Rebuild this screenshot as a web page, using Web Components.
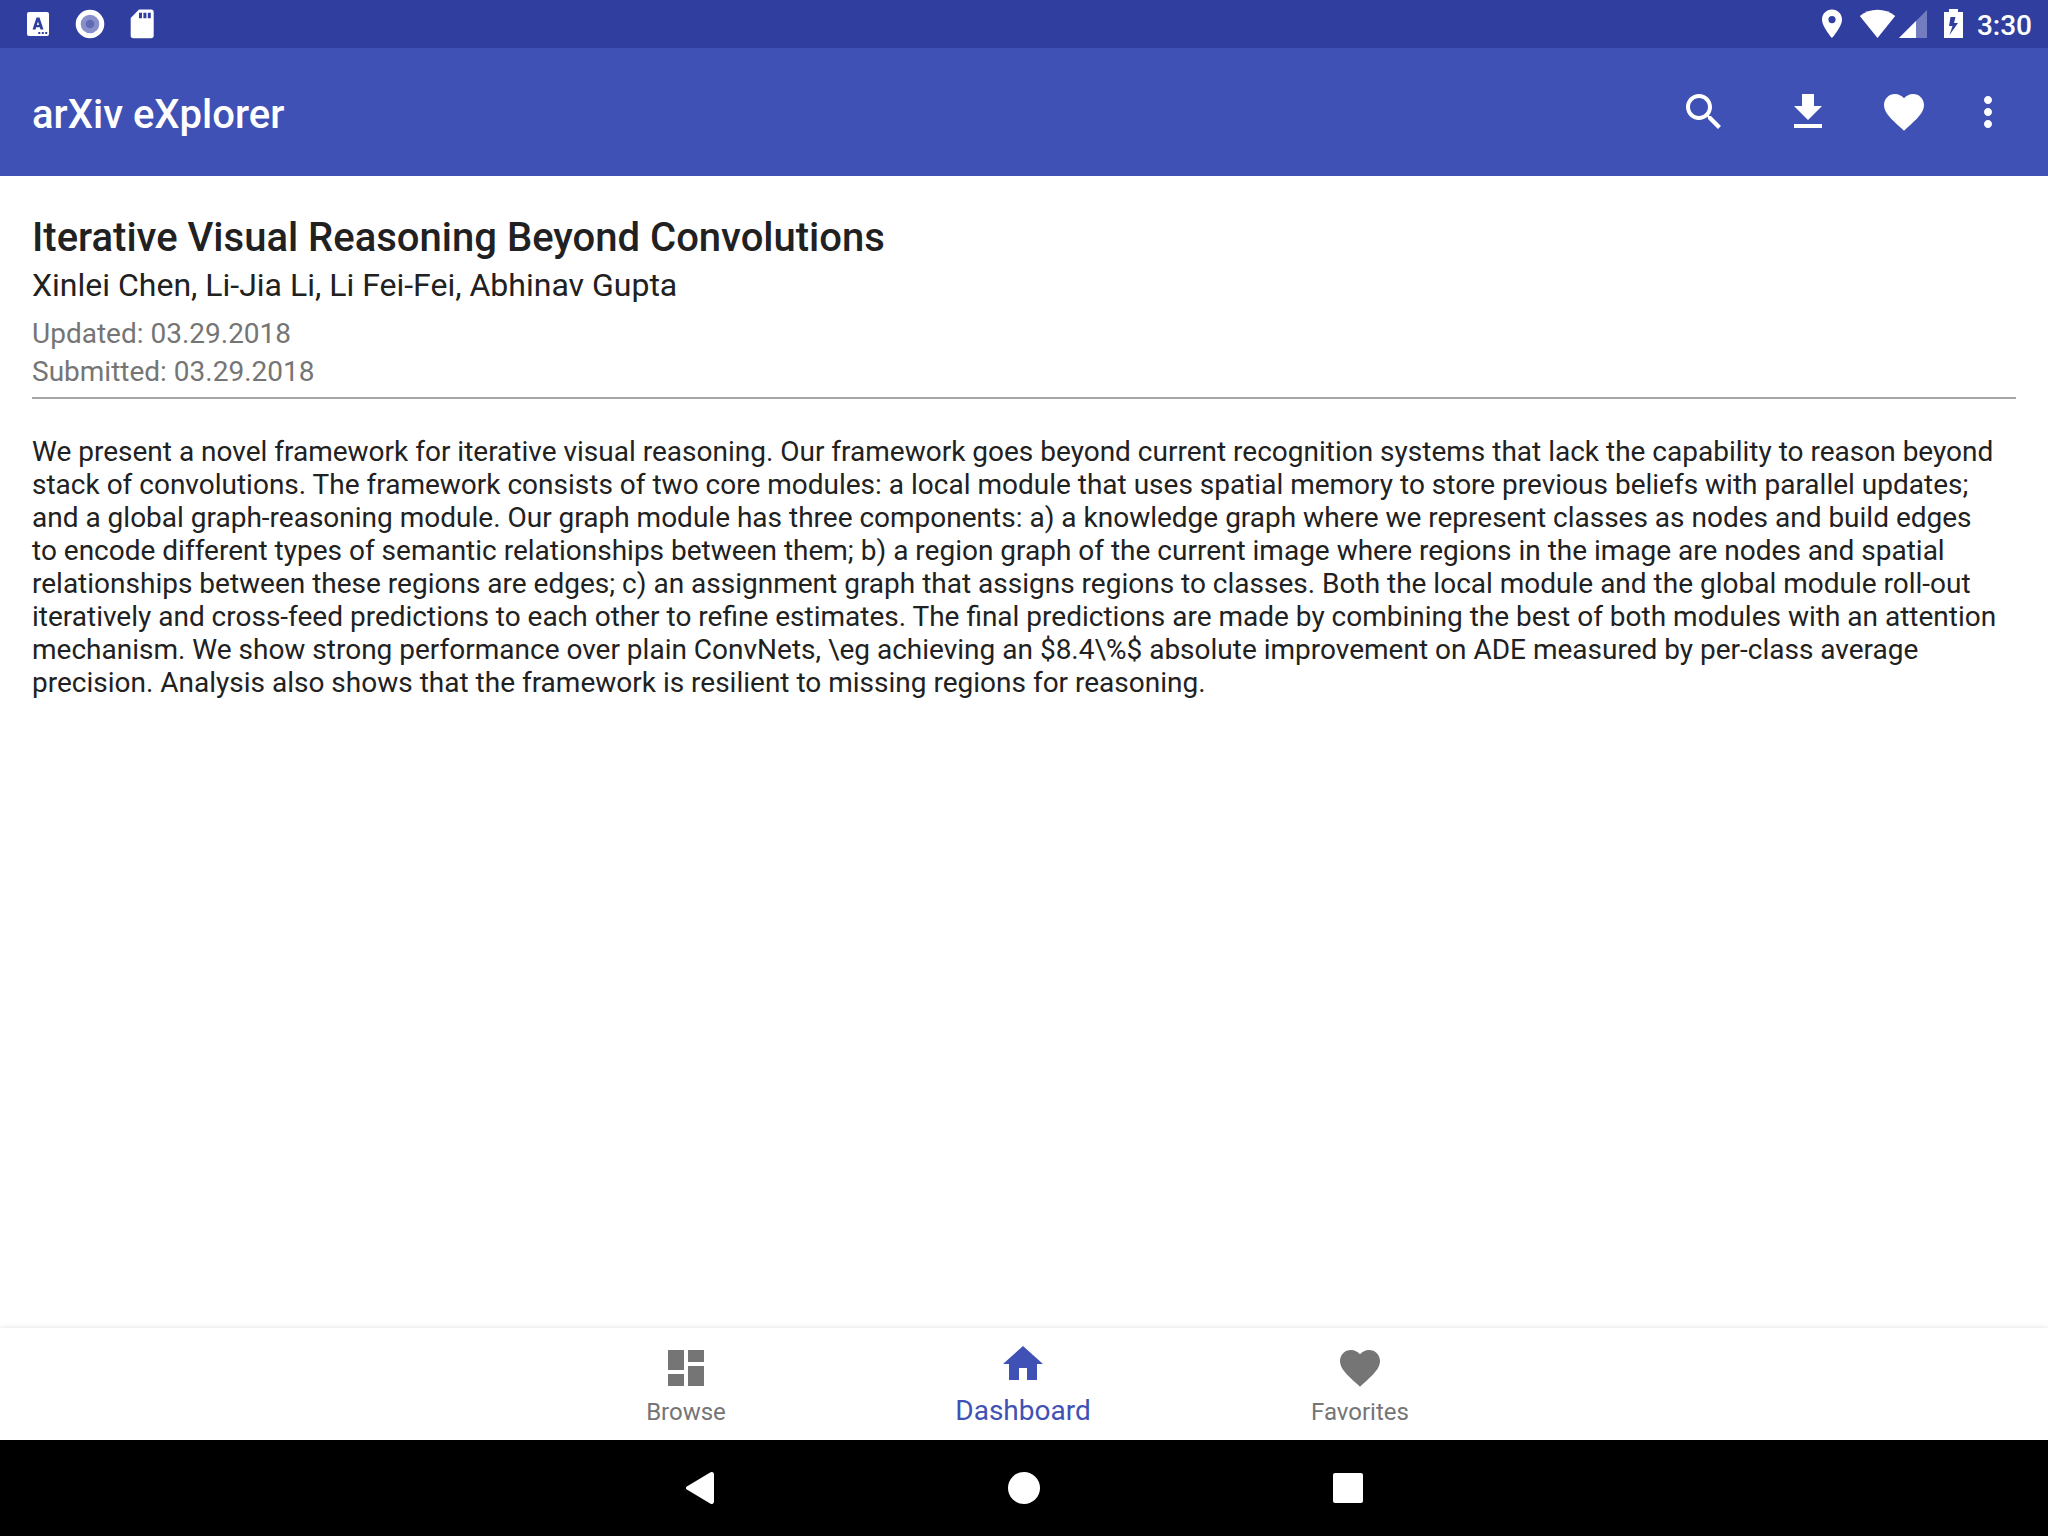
<!DOCTYPE html>
<html lang="en">
<head>
<meta charset="utf-8">
<title>arXiv eXplorer</title>
<style>
  html, body { height: 100%; margin: 0; }
  body { font-family: Roboto, "Noto Sans", sans-serif; color: #212121; background: #fff; }
</style>
</head>
<body>
<explorer-app></explorer-app>

<script>
  const ICONS = {
    search: '<path d="M15.5 14h-.79l-.28-.27C15.41 12.59 16 11.11 16 9.5 16 5.91 13.09 3 9.5 3S3 5.91 3 9.5 5.91 16 9.5 16c1.61 0 3.09-.59 4.23-1.57l.27.28v.79l5 4.99L20.49 19l-4.99-5zm-6 0C7.01 14 5 11.99 5 9.5S7.01 5 9.5 5 14 7.01 14 9.5 11.99 14 9.5 14z"/>',
    download: '<path d="M19 9h-4V3H9v6H5l7 7 7-7zM5 18v2h14v-2H5z"/>',
    heart: '<path d="M12 21.35l-1.45-1.32C5.4 15.36 2 12.28 2 8.5 2 5.42 4.42 3 7.5 3c1.74 0 3.41.81 4.5 2.09C13.09 3.81 14.76 3 16.5 3 19.58 3 22 5.42 22 8.5c0 3.78-3.4 6.86-8.55 11.54L12 21.35z"/>',
    more: '<path d="M12 8c1.1 0 2-.9 2-2s-.9-2-2-2-2 .9-2 2 .9 2 2 2zm0 2c-1.1 0-2 .9-2 2s.9 2 2 2 2-.9 2-2-.9-2-2-2zm0 6c-1.1 0-2 .9-2 2s.9 2 2 2 2-.9 2-2-.9-2-2-2z"/>',
    browse: '<path d="M3 13h8V3H3v10zm0 8h8v-6H3v6zm10 0h8V11h-8v10zm0-18v6h8V3h-8z"/>',
    home: '<path d="M10 20v-6h4v6h5v-8h3L12 3 2 12h3v8z"/>',
    back: '<path d="M17.3 4.15L5.4 11.2a.95.95 0 0 0 0 1.6L17.3 19.85A1.15 1.15 0 0 0 19 18.9V5.1a1.15 1.15 0 0 0-1.700-.95z"/>',
    circle: '<circle cx="12" cy="12" r="8"/>',
    square: '<rect x="4.5" y="4.5" width="15" height="15" rx="1"/>'
  };

  class MdIcon extends HTMLElement {
    connectedCallback() {
      this.attachShadow({ mode: 'open' }).innerHTML = `
        <style>
          :host { display: block; width: 48px; height: 48px; }
          svg { display: block; width: 100%; height: 100%; fill: currentColor; }
        </style>
        <svg viewBox="0 0 24 24" aria-hidden="true">${ICONS[this.getAttribute('name')]}</svg>`;
    }
  }
  customElements.define('md-icon', MdIcon);

  class StatusBar extends HTMLElement {
    connectedCallback() {
      this.attachShadow({ mode: 'open' }).innerHTML = `
        <style>
          :host { display: flex; justify-content: space-between; align-items: center; height: 48px;
                  padding: 0 16px 0 24px; background: #303f9f; color: #fff; box-sizing: border-box; }
          div { display: flex; align-items: center; }
          svg { display: block; height: 48px; fill: currentColor; }
          time { font-size: 28px; line-height: 48px; font-weight: 500; padding-top: 3px; }
        </style>
        <div>
          <svg width="136" viewBox="24 0 136 48" aria-hidden="true">
            <path fill-rule="evenodd" d="M29 12h18a2 2 0 0 1 2 2v20a2 2 0 0 1-2 2H29a2 2 0 0 1-2-2V14a2 2 0 0 1 2-2zM36.500 17.500L32.500 29.500h3l.7-2.200h3.600l.7 2.200h3L39.500 17.500zM38 21.500l1.100 3.400h-2.200zM38.300 32v2h2v-2zM41.800 32v2h2v-2zM45.200 32v2h2v-2z"/>
            <circle cx="90" cy="24" r="14.300"/>
            <circle cx="90" cy="24" r="9.300" fill="#8790c8"/>
            <circle cx="90" cy="24" r="4.300" fill="#5f6bb5"/>
            <path fill-rule="evenodd" d="M139 9.500h12a2.700 2.700 0 0 1 2.700 2.700v23.400a2.700 2.700 0 0 1-2.700 2.700h-17.600a2.700 2.700 0 0 1-2.700-2.700V18zM139 12.700v5.500h3v-5.500zM143.400 12.700v5.500h3v-5.500zM147.800 12.700v5.500h3v-5.500z"/>
          </svg>
        </div>
        <div>
          <svg width="157" viewBox="1820 0 157 48" aria-hidden="true">
            <path fill-rule="evenodd" d="M1832 9.500c-5.600 0-10 4.400-10 10 0 7.300 10 18.500 10 18.500s10-11.200 10-18.500c0-5.600-4.400-10-10-10zM1832 16a3.500 3.500 0 1 1 0 7.200a3.500 3.500 0 1 1 0-7.200z"/>
            <path d="M1877.500 38L1859.800 16a28.500 28.500 0 0 1 35.400 0z"/>
            <path d="M1927 10v28h-28z" opacity=".32"/>
            <path d="M1916 21v17h-17z"/>
            <path fill-rule="evenodd" d="M1949 9h9v3h5v26h-19V12h5zM1950.500 17l-1.500 9h3.500l-3 9 8.500-12h-4l1.500-6z"/>
          </svg>
          <time datetime="03:30">3:30</time>
        </div>`;
    }
  }
  customElements.define('status-bar', StatusBar);

  class AppBar extends HTMLElement {
    connectedCallback() {
      this.attachShadow({ mode: 'open' }).innerHTML = `
        <style>
          :host { display: flex; justify-content: space-between; align-items: center; height: 128px;
                  padding: 0 24px 0 32px; background: #3f51b5; color: #fff; box-sizing: border-box; }
          h1 { margin: 0; padding-top: 6px; font-size: 40px; line-height: 48px; font-weight: 500; }
          div { display: flex; }
          button { display: flex; justify-content: center; align-items: center; width: 96px; height: 96px;
                   padding: 0; border: 0; background: none; color: inherit; }
          .wide { width: 112px; }
          .narrow { width: 72px; }
        </style>
        <h1><slot></slot></h1>
        <div>
          <button class="wide" aria-label="Search"><md-icon name="search"></md-icon></button>
          <button aria-label="Download"><md-icon name="download"></md-icon></button>
          <button aria-label="Favorite"><md-icon name="heart"></md-icon></button>
          <button class="narrow" aria-label="More options"><md-icon name="more"></md-icon></button>
        </div>`;
    }
  }
  customElements.define('app-bar', AppBar);

  class PaperDetail extends HTMLElement {
    connectedCallback() {
      this.attachShadow({ mode: 'open' }).innerHTML = `
        <style>
          :host { display: block; padding: 38px 32px; }
          header { border-bottom: 2px solid #a6a6a6; padding-bottom: 6px; margin-bottom: 36px; }
          h2 { margin: 0; font-size: 40px; line-height: 48px; font-weight: 500; }
          .authors { font-size: 32px; line-height: 46px; }
          .dates { font-size: 28px; line-height: 38px; color: #757575; padding-top: 7px; }
          .abstract { font-size: 28px; line-height: 33px; padding-right: 16px; }
        </style>
        <header>
          <h2><slot name="title"></slot></h2>
          <div class="authors"><slot name="authors"></slot></div>
          <div class="dates"><slot name="dates"></slot></div>
        </header>
        <div class="abstract"><slot></slot></div>`;
    }
  }
  customElements.define('paper-detail', PaperDetail);

  class NavItem extends HTMLElement {
    connectedCallback() {
      this.attachShadow({ mode: 'open' }).innerHTML = `
        <style>
          :host { display: block; width: 336px; color: #757575; font-size: 24px; }
          :host([active]) { color: #3f51b5; font-size: 28px; }
          a { display: flex; flex-direction: column; align-items: center; height: 112px; padding-top: 16px;
              box-sizing: border-box; color: inherit; text-decoration: none; line-height: 40px; }
          :host([active]) a { padding-top: 12px; }
          :host([active]) span { padding-top: 3px; }
        </style>
        <a href="#"><md-icon name="${this.getAttribute('icon')}"></md-icon><span><slot></slot></span></a>`;
    }
  }
  customElements.define('nav-item', NavItem);

  class BottomNav extends HTMLElement {
    connectedCallback() {
      this.attachShadow({ mode: 'open' }).innerHTML = `
        <style>
          :host { display: block; background: #fff; box-shadow: 0 0 6px rgba(0,0,0,.12); }
          nav { display: flex; justify-content: center; gap: 1px; padding-right: 2px; }
        </style>
        <nav aria-label="Main"><slot></slot></nav>`;
    }
  }
  customElements.define('bottom-nav', BottomNav);

  class SystemNav extends HTMLElement {
    connectedCallback() {
      this.attachShadow({ mode: 'open' }).innerHTML = `
        <style>
          :host { display: flex; justify-content: center; height: 96px; background: #000; color: #fff; }
          button { display: flex; justify-content: center; align-items: center; width: 324px; height: 96px;
                   padding: 0; border: 0; background: none; color: inherit; }
        </style>
        <button aria-label="Back"><md-icon name="back"></md-icon></button>
        <button aria-label="Home"><md-icon name="circle"></md-icon></button>
        <button aria-label="Recent apps"><md-icon name="square"></md-icon></button>`;
    }
  }
  customElements.define('system-nav', SystemNav);

  class ExplorerApp extends HTMLElement {
    connectedCallback() {
      this.attachShadow({ mode: 'open' }).innerHTML = `
        <style>
          :host { display: flex; flex-direction: column; min-height: 100%; }
          main { flex: 1; }
          system-nav { z-index: 1; }
        </style>
        <status-bar></status-bar>
        <app-bar>arXiv eXplorer</app-bar>
        <main>
          <paper-detail>
            <span slot="title">Iterative Visual Reasoning Beyond Convolutions</span>
            <span slot="authors">Xinlei Chen, Li-Jia Li, Li Fei-Fei, Abhinav Gupta</span>
            <div slot="dates">Updated: 03.29.2018</div>
            <div slot="dates">Submitted: 03.29.2018</div>
            We present a novel framework for iterative visual reasoning. Our framework goes beyond current recognition systems that lack the capability to reason beyond stack of convolutions. The framework consists of two core modules: a local module that uses spatial memory to store previous beliefs with parallel updates; and a global graph-reasoning module. Our graph module has three components: a) a knowledge graph where we represent classes as nodes and build edges to encode different types of semantic relationships between them; b) a region graph of the current image where regions in the image are nodes and spatial relationships between these regions are edges; c) an assignment graph that assigns regions to classes. Both the local module and the global module roll-out iteratively and cross-feed predictions to each other to refine estimates. The final predictions are made by combining the best of both modules with an attention mechanism. We show strong performance over plain ConvNets, \\eg achieving an $8.4\\%$ absolute improvement on ADE measured by per-class average precision. Analysis also shows that the framework is resilient to missing regions for reasoning.
          </paper-detail>
        </main>
        <bottom-nav>
          <nav-item icon="browse">Browse</nav-item>
          <nav-item icon="home" active>Dashboard</nav-item>
          <nav-item icon="heart">Favorites</nav-item>
        </bottom-nav>
        <system-nav></system-nav>`;
    }
  }
  customElements.define('explorer-app', ExplorerApp);
</script>
</body>
</html>
